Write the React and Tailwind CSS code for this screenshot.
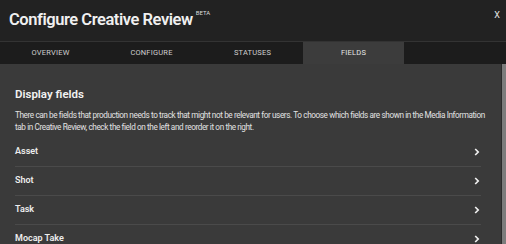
const tabs = ['OVERVIEW', 'CONFIGURE', 'STATUSES', 'FIELDS'];
const fields = ['Asset', 'Shot', 'Task', 'Mocap Take'];

function Chevron() {
  return (
    <svg width="6" height="8" viewBox="0 0 6 8" className="mr-[1px]">
      <polyline points="1.2,1 4.2,4 1.2,7" fill="none" stroke="#f0f0f0" strokeWidth="1.7" />
    </svg>
  );
}

export default function App() {
  return (
    <div className="w-[506px] h-[244px] overflow-hidden bg-[#3a3a3a] text-white flex flex-col" style={{ fontFamily: 'Roboto, "Noto Sans", sans-serif' }}>
      <div className="h-[42px] shrink-0 bg-[#222222] border-b border-[#333333] flex items-start justify-between pl-[9px] pr-[6px]">
        <h1 className="mt-[11px] text-[16.5px] font-semibold leading-[18px] tracking-[-0.45px] text-[#f0f0f0]">
          Configure Creative Review
          <sup className="text-[6px] font-normal ml-[3px] align-[7px] tracking-normal text-[#dddddd]">BETA</sup>
        </h1>
        <button className="mt-[11px] text-[9px] text-[#e8e8e8] leading-none">X</button>
      </div>
      <div className="h-[22px] shrink-0 bg-[#1c1c1c] flex">
        {tabs.map((t) => (
          <div
            key={t}
            className={
              'w-[101px] flex items-center justify-center text-[7.5px] tracking-[0.2px] ' +
              (t === 'FIELDS' ? 'bg-[#3c3c3c] text-[#e6e6e6]' : 'text-[#d0d0d0]')
            }
          >
            {t}
          </div>
        ))}
      </div>
      <div className="flex-1 flex min-h-0">
        <div className="flex-1 pl-[15px] pr-[20px] pt-[23px]">
          <h2 className="text-[11.5px] font-semibold leading-[14px] text-[#f2f2f2]">Display fields</h2>
          <p className="mt-[8px] mr-[-12px] text-[8.2px] leading-[12px] tracking-[-0.4px] text-[#e2e2e2]">
            There can be fields that production needs to track that might not be relevant for users. To choose which fields are shown in the Media Information tab in Creative Review, check the field on the left and reorder it on the right.
          </p>
          <div className="mt-[4px]">
            {fields.map((f, i) => (
              <div
                key={f}
                className={'h-[29px] flex items-center justify-between ' + (i > 0 ? 'border-t border-[#4a4a4a]' : '')}
              >
                <span className="text-[9px] font-semibold text-[#ededed]">{f}</span>
                <Chevron />
              </div>
            ))}
          </div>
        </div>
        <div className="w-[5px] bg-[#7c7c7c] border-l border-[#2c2c2c]" />
      </div>
    </div>
  );
}
